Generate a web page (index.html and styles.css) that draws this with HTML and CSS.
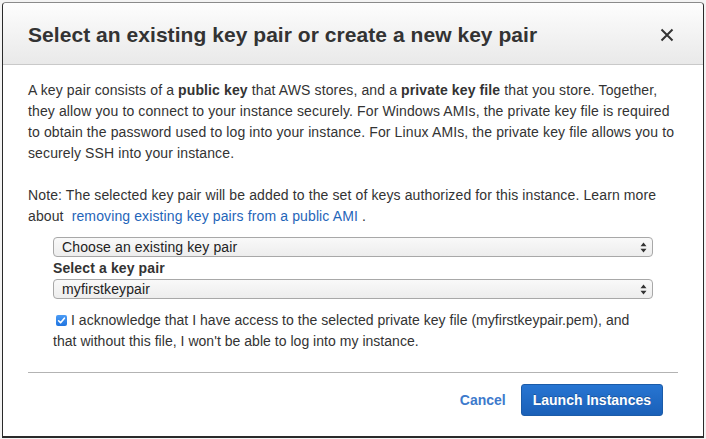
FILE: index.html
```html
<!DOCTYPE html>
<html>
<head>
<meta charset="utf-8">
<link rel="stylesheet" href="styles.css">
</head>
<body>
<div class="dialog">
  <div class="header">
    <h1 class="title">Select an existing key pair or create a new key pair</h1>
    <svg class="close" width="14" height="14" viewBox="0 0 14 14"><path d="M1.5 1.5 L12.5 12.5 M12.5 1.5 L1.5 12.5" stroke="#333" stroke-width="2" fill="none"/></svg>
  </div>
  <div class="body">
    <p class="para">A key pair consists of a <b>public key</b> that AWS stores, and a <b>private key file</b> that you store. Together, they allow you to connect to your instance securely. For Windows AMIs, the private key file is required to obtain the password used to log into your instance. For Linux AMIs, the private key file allows you to securely SSH into your instance.</p>
    <p class="para">Note: The selected key pair will be added to the set of keys authorized for this instance. Learn more about &nbsp;<a class="link">removing existing key pairs from a public AMI</a>&nbsp;.</p>
    <div class="form">
      <div class="select">
        <span>Choose an existing key pair</span>
        <svg class="arrows" width="7" height="11" viewBox="0 0 7 11"><path d="M3.5 0.5 L6.5 4.2 L0.5 4.2 Z M3.5 10.5 L6.5 6.8 L0.5 6.8 Z" fill="#333"/></svg>
      </div>
      <div class="label">Select a key pair</div>
      <div class="select">
        <span>myfirstkeypair</span>
        <svg class="arrows" width="7" height="11" viewBox="0 0 7 11"><path d="M3.5 0.5 L6.5 4.2 L0.5 4.2 Z M3.5 10.5 L6.5 6.8 L0.5 6.8 Z" fill="#333"/></svg>
      </div>
      <p class="ack"><span class="check"><svg width="11" height="11" viewBox="0 0 11 11"><path d="M2.6 5.8 L4.6 7.8 L8.4 3.2" stroke="#fff" stroke-width="1.6" fill="none" stroke-linecap="round" stroke-linejoin="round"/></svg></span>I acknowledge that I have access to the selected private key file (myfirstkeypair.pem), and that without this file, I won't be able to log into my instance.</p>
    </div>
    <div class="sep"></div>
    <div class="footer">
      <a class="cancel">Cancel</a>
      <button class="launch">Launch Instances</button>
    </div>
  </div>
</div>
</body>
</html>
```

FILE: styles.css
```css
html, body {
  margin: 0;
  padding: 0;
}
body {
  background: #f3f3f3;
  font-family: "Liberation Sans", Arial, Helvetica, sans-serif;
  color: #333;
  width: 706px;
  height: 439px;
  overflow: hidden;
}
.dialog {
  margin: 2px 2px 0 2px;
  height: 433px;
  background: #fff;
  border: 1px solid #2a2a2a;
  border-top-color: #8a8a8a;
  border-bottom-width: 2px;
  border-radius: 4px 4px 0 0;
  display: flex;
  flex-direction: column;
}
.header {
  height: 61px;
  border-bottom: 1px solid #c9c9c9;
  background: linear-gradient(#fdfdfd, #e9e9e9);
  border-radius: 4px 4px 0 0;
  display: flex;
  align-items: center;
  justify-content: space-between;
  padding: 0 29px 0 25px;
}
.title {
  margin: 0;
  font-size: 21px;
  font-weight: bold;
  color: #333;
  letter-spacing: 0.05px;
  padding-top: 2px;
}
.close {
  margin-top: 2px;
}
.body {
  padding: 15px 25px 0 25px;
  font-size: 14px;
  line-height: 21px;
  letter-spacing: 0.12px;
}
.para {
  margin: 0 0 21px 0;
}
.para:nth-child(2) {
  margin-bottom: 10px;
}
.link {
  color: #1f65b9;
}
.form {
  margin-left: 25px;
  width: 600px;
}
.select {
  height: 18px;
  border: 1px solid #a8a8a8;
  border-radius: 4px;
  background: linear-gradient(#f9f9f9, #ededed);
  display: flex;
  align-items: center;
  justify-content: space-between;
  padding: 0 5px 0 8px;
  font-size: 14px;
  line-height: 18px;
  color: #222;
}
.arrows {
  display: block;
}
.label {
  font-weight: bold;
  line-height: 21px;
  margin-top: 1px;
  color: #333;
}
.ack {
  margin: 11px 0 0 0;
  letter-spacing: 0.03px;
}
.check {
  display: inline-block;
  width: 11px;
  height: 11px;
  margin: 0 4px 0 3px;
  background: linear-gradient(#4c9cf5, #1f74e0);
  border-radius: 2px;
  vertical-align: -1px;
}
.check svg {
  display: block;
}
.sep {
  height: 1px;
  background: #b3b3b3;
  margin-top: 20px;
}
.footer {
  display: flex;
  justify-content: flex-end;
  align-items: center;
  padding-top: 11px;
  padding-right: 15px;
  gap: 15px;
}
.cancel {
  color: #3d7acc;
  font-weight: bold;
  font-size: 14px;
  letter-spacing: 0;
}
.launch {
  height: 32px;
  padding: 0 11px;
  border: 1px solid #1b5ba8;
  border-radius: 3px;
  background: linear-gradient(#2775d2, #1a60b8);
  color: #fff;
  font-family: "Liberation Sans", Arial, sans-serif;
  font-weight: bold;
  font-size: 14px;
  letter-spacing: 0;
  text-shadow: 0 -1px 0 rgba(0,0,0,0.25);
}
```
